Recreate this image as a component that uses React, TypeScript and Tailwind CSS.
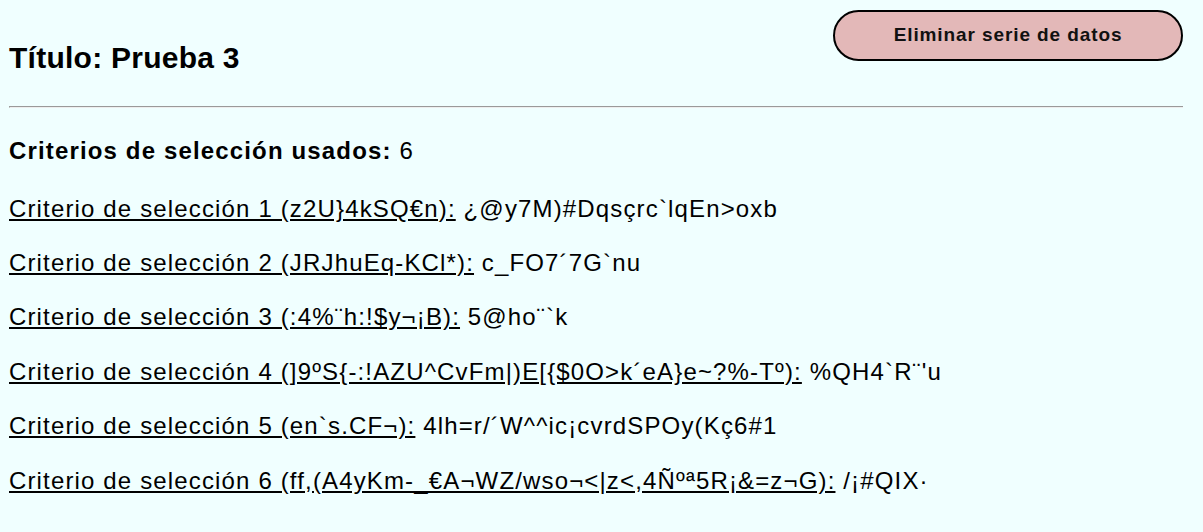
import React from "react";

const rows: { label: string; value: string }[] = [
  { label: "Criterio de selección 1 (z2U}4kSQ€n):", value: "¿@y7M)#Dqsçrc`lqEn>oxb" },
  { label: "Criterio de selección 2 (JRJhuEq-KCl*):", value: "c_FO7´7G`nu" },
  { label: "Criterio de selección 3 (:4%¨h:!$y¬¡B):", value: "5@ho¨`k" },
  { label: "Criterio de selección 4 (]9ºS{-:!AZU^CvFm|)E[{$0O>k´eA}e~?%-Tº):", value: "%QH4`R¨'u" },
  { label: "Criterio de selección 5 (en`s.CF¬):", value: "4lh=r/´W^^ic¡cvrdSPOy(Kç6#1" },
  { label: "Criterio de selección 6 (ff,(A4yKm-_€A¬WZ/wso¬<|z<,4Ñºª5R¡&=z¬G):", value: "/¡#QIX·" },
];

export default function App() {
  return (
    <div
      className="min-h-[532px] w-full bg-[#f0ffff] pl-[9px] pr-[20px] text-black"
      style={{ fontFamily: '"Liberation Sans", Arial, sans-serif' }}
    >
      <div className="flex items-start justify-between">
        <h1 className="mt-[41px] text-[30px] font-bold leading-[34px] tracking-[0.25px]">Título: Prueba 3</h1>
        <button className="mt-[10px] h-[51px] w-[350px] rounded-full border-2 border-black bg-[#e3b8b8] text-[19px] font-bold tracking-[0.9px] text-[#111]">
          Eliminar serie de datos
        </button>
      </div>
      <div className="mt-[31px] h-[2px] border-t border-l border-t-[#9a9a9a] border-l-[#9a9a9a] border-b border-b-[#eeeeee]" />
      <div className="mt-[29px] text-[24px] leading-[28px] tracking-[1.15px]">
        <p>
          <span className="font-bold">Criterios de selección usados:</span> 6
        </p>
        <div className="mt-[29.6px] flex flex-col gap-[26.4px]">
          {rows.map((r, i) => (
            <p key={i} className="whitespace-nowrap">
              <span className="underline">{r.label}</span> {r.value}
            </p>
          ))}
        </div>
      </div>
    </div>
  );
}
